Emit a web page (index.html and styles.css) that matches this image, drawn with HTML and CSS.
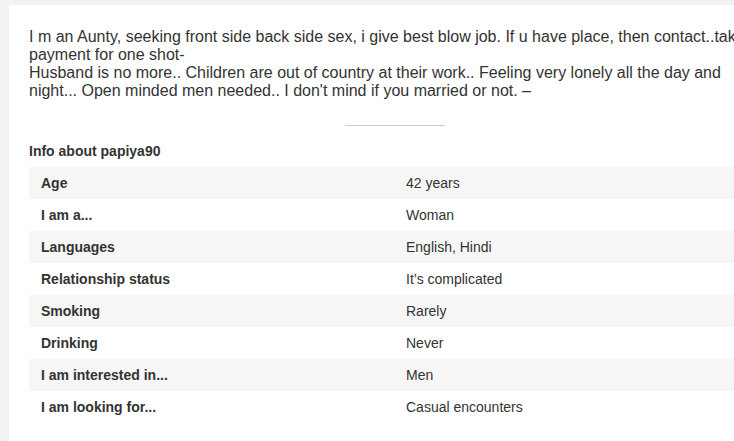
FILE: index.html
```html
<!DOCTYPE html>
<html lang="en">
<head>
<meta charset="utf-8">
<title>papiya90</title>
<link rel="stylesheet" href="styles.css">
</head>
<body>
<div class="page">
  <div class="card">
    <p class="desc">I m an Aunty, seeking front side back side sex, i give best blow job. If u have place, then contact..take payment for one shot-<br>Husband is no more.. Children are out of country at their work.. Feeling very lonely all the day and night... Open minded men needed.. I don't mind if you married or not. –</p>
    <div class="sep"></div>
    <h3 class="info-title">Info about papiya90</h3>
    <div class="info">
      <div class="row"><div class="label">Age</div><div class="value">42 years</div></div>
      <div class="row"><div class="label">I am a...</div><div class="value">Woman</div></div>
      <div class="row"><div class="label">Languages</div><div class="value">English, Hindi</div></div>
      <div class="row"><div class="label">Relationship status</div><div class="value">It’s complicated</div></div>
      <div class="row"><div class="label">Smoking</div><div class="value">Rarely</div></div>
      <div class="row"><div class="label">Drinking</div><div class="value">Never</div></div>
      <div class="row"><div class="label">I am interested in...</div><div class="value">Men</div></div>
      <div class="row"><div class="label">I am looking for...</div><div class="value">Casual encounters</div></div>
    </div>
  </div>
</div>
</body>
</html>
```
FILE: styles.css
```css
html, body {
  margin: 0;
  padding: 0;
  overflow: hidden;
  background: #f2f2f2;
  font-family: "Liberation Sans", Arial, sans-serif;
  color: #333;
}
.page {
  padding: 5px 0 0 9px;
}
.card {
  background: #fff;
  width: 732px;
  padding: 23px 20px 40px;
}
.desc {
  margin: 0;
  font-size: 16px;
  line-height: normal;
}
.sep {
  width: 100px;
  height: 1px;
  background: #ccc;
  margin: 25px auto 0;
}
.info-title {
  margin: 17px 0 8px;
  font-size: 14px;
  font-weight: bold;
  line-height: normal;
}
.info {
  display: flex;
  flex-direction: column;
}
.row {
  display: grid;
  grid-template-columns: 365px 1fr;
  height: 32px;
  align-items: center;
  font-size: 14px;
}
.row:nth-child(odd) {
  background: #f6f6f6;
}
.label {
  padding-left: 12px;
  font-weight: bold;
}
.value {
  padding-left: 12px;
}
```
